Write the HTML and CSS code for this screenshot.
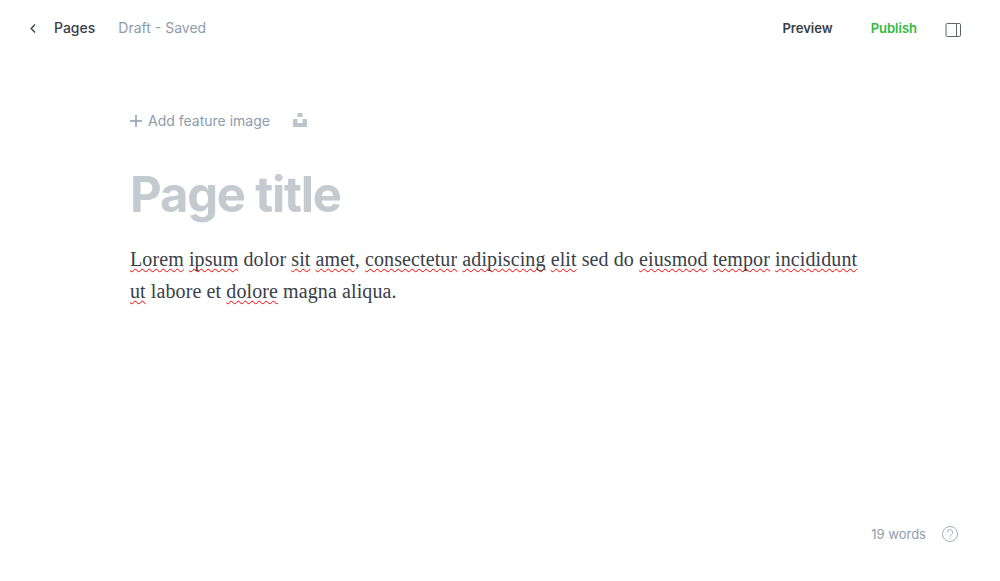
FILE: index.html
```html
<!DOCTYPE html>
<html lang="en">
<head>
<meta charset="utf-8">
<meta name="viewport" content="width=device-width, initial-scale=1">
<title>Page editor</title>
<link rel="stylesheet" href="styles.css">
</head>
<body>
<div class="editor">
  <header class="topbar">
    <nav class="topbar-group">
      <a class="back" href="#">
        <svg class="icon-chevron" viewBox="0 0 6 10" aria-hidden="true"><path d="M5 1.5 1.2 5.5 5 9.5"/></svg>
        <span>Pages</span>
      </a>
      <span class="status">Draft - Saved</span>
    </nav>
    <div class="topbar-actions">
      <button class="action" type="button">Preview</button>
      <button class="action publish" type="button">Publish</button>
      <button class="icon-button sidebar-toggle" type="button" aria-label="Settings">
        <svg class="icon-sidebar" viewBox="0 0 16 16" aria-hidden="true"><rect x="1" y="1.5" width="14.5" height="13" rx="1.2"/><path d="M11.5 1.5v13"/></svg>
      </button>
    </div>
  </header>
  <main class="canvas">
    <div class="feature">
      <button class="add-image" type="button">
        <svg class="icon-plus" viewBox="0 0 12 12" aria-hidden="true"><path d="M6 0v12M0 6h12"/></svg>
        <span>Add feature image</span>
      </button>
      <button class="icon-button unsplash" type="button" aria-label="Unsplash">
        <svg class="icon-unsplash" viewBox="0 0 14 14" aria-hidden="true"><path d="M4.4 0h5.2v4H4.4zM0 6h4.4v4h5.2V6H14v8H0z"/></svg>
      </button>
    </div>
    <input class="title" type="text" placeholder="Page title" aria-label="Page title">
    <div class="body" contenteditable="true" spellcheck="false" role="textbox" aria-label="Page content">
      <p><span class="typo">Lorem</span> <span class="typo">ipsum</span> dolor <span class="typo">sit</span> <span class="typo">amet</span>, <span class="typo">consectetur</span> <span class="typo">adipiscing</span> <span class="typo">elit</span> sed do <span class="typo">eiusmod</span> <span class="typo">tempor</span> <span class="typo">incididunt</span> <span class="typo">ut</span> labore et <span class="typo">dolore</span> magna aliqua.</p>
    </div>
  </main>
  <footer class="footer">
    <span>19 words</span>
    <a class="help" href="#" aria-label="Help">
      <svg class="icon-help" viewBox="0 0 16 16" aria-hidden="true"><circle cx="8" cy="8" r="7.5"/><path d="M5.3 6.4a2.7 2.7 0 1 1 4 2.3C8.4 9.2 8 9.6 8 10.6"/><path d="M8 11.8v1"/></svg>
    </a>
  </footer>
</div>
</body>
</html>
```
FILE: styles.css
```css
* { box-sizing: border-box; }

body {
  margin: 0;
  background: #fff;
  color: #394047;
  font-family: Inter, "Liberation Sans", sans-serif;
  font-size: 14px;
  line-height: 20px;
}

button, input {
  margin: 0;
  padding: 0;
  border: 0;
  background: none;
  color: inherit;
  font: inherit;
}

button { cursor: pointer; }
a { color: inherit; text-decoration: none; }
svg { display: block; fill: none; stroke: currentColor; }

.editor {
  display: flex;
  flex-direction: column;
  min-height: 100vh;
}

.topbar {
  display: flex;
  justify-content: space-between;
  align-items: center;
  height: 56px;
  padding: 0 39px 0 30px;
}

.topbar-group { display: flex; gap: 23px; }
.back { display: flex; align-items: center; gap: 18px; font-weight: 500; }
.icon-chevron { width: 6px; height: 10px; stroke-width: 1.4; }
.status { color: #8e9cac; }

.topbar-actions { display: flex; align-items: center; }
.action { margin-right: 38px; font-size: 13px; font-weight: 600; }
.publish { margin-right: 28px; color: #30b940; }
.sidebar-toggle { padding-top: 4px; }
.icon-sidebar { width: 16px; height: 16px; stroke: #5d646b; }

.canvas {
  flex: 1;
  width: 100%;
  max-width: 740px;
  margin: 0 auto;
  padding-top: 55px;
}

.feature { display: flex; align-items: center; gap: 23px; color: #8e9cac; }
.add-image { display: flex; align-items: center; gap: 6px; }
.icon-plus { width: 12px; height: 12px; stroke-width: 1.5; }
.unsplash { padding-bottom: 2px; }
.icon-unsplash { width: 14px; height: 14px; fill: #bcc5cb; stroke: none; }

.title {
  display: block;
  width: 100%;
  height: 60px;
  margin: 34px 0 18px;
  outline: 0;
  font-size: 49px;
  font-weight: 700;
  line-height: 60px;
  letter-spacing: -0.025em;
}
.title::placeholder { color: #c3cad0; opacity: 1; }

.body {
  outline: 0;
  font-family: "Liberation Serif", serif;
  font-size: 20px;
  line-height: 32px;
  letter-spacing: 0.1px;
}
.body p { margin: 0; }
.typo {
  text-decoration: underline wavy #f00 1px;
  text-decoration-skip-ink: none;
  text-underline-offset: 2px;
}

.footer {
  display: flex;
  justify-content: flex-end;
  align-items: center;
  gap: 16px;
  padding: 0 42px 37px;
  color: #8e9cac;
  font-size: 13px;
}
.icon-help { width: 16px; height: 16px; stroke-width: 0.8; }
```
